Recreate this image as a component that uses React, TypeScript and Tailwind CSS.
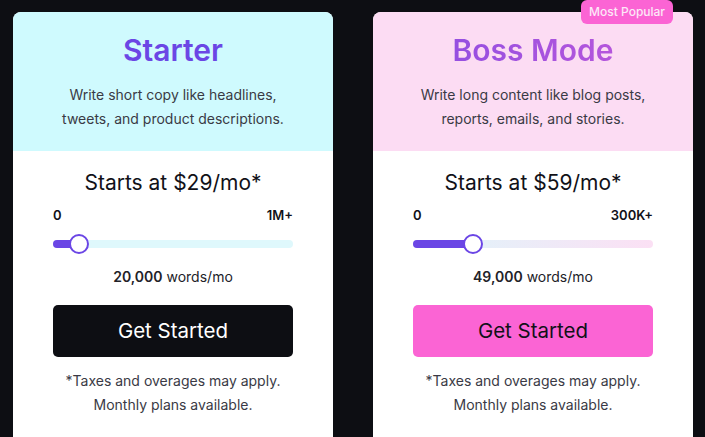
import React from "react";

const font = { fontFamily: "Inter, 'Noto Sans', sans-serif" };

function Slider({ pct, track }: { pct: number; track: string }) {
  return (
    <div className="relative mt-[9px] h-[20px] w-full">
      <div className={`absolute left-0 right-0 top-[6px] h-[8px] rounded-full ${track}`} />
      <div
        className="absolute left-0 top-[6px] h-[8px] rounded-full bg-[#6b46e5]"
        style={{ width: `${pct}%` }}
      />
      <div
        className="absolute top-0 h-[20px] w-[20px] -translate-x-1/2 rounded-full border-2 border-[#6b46e5] bg-white"
        style={{ left: `${pct}%` }}
      />
    </div>
  );
}

function Card({
  title,
  titleClass,
  headerBg,
  desc1,
  desc2,
  price,
  max,
  pct,
  track,
  words,
  btnClass,
  badge,
}: {
  title: string;
  titleClass: string;
  headerBg: string;
  desc1: string;
  desc2: string;
  price: string;
  max: string;
  pct: number;
  track: string;
  words: string;
  btnClass: string;
  badge?: boolean;
}) {
  return (
    <div className="relative w-[320px] shrink-0">
      {badge && (
        <div className="absolute right-[20px] top-[-12px] z-10 rounded-md bg-[#fb64d4] px-[8px] text-[12px] font-medium leading-[24px] text-[#fde8f7]">
          Most Popular
        </div>
      )}
      <div className="overflow-hidden rounded-t-[8px] bg-white">
        <div className={`${headerBg} px-5 pb-[20px] pt-[20px] text-center`}>
          <div className={`text-[30px] font-semibold leading-[36px] ${titleClass}`}>
            {title}
          </div>
          <div className="mt-[15px] text-[14px] leading-[24px] text-[#3a3a45]">
            <div>{desc1}</div>
            <div>{desc2}</div>
          </div>
        </div>
        <div className="px-[40px] pb-[40px] pt-[18px] text-center">
          <div className="text-[21px] leading-[28px] text-[#111118]">{price}</div>
          <div className="mt-[8px] flex justify-between text-[13px] font-semibold leading-[20px] text-[#111118]">
            <span>0</span>
            <span>{max}</span>
          </div>
          <Slider pct={pct} track={track} />
          <div className="mt-[13px] text-[14px] leading-[20px] text-[#222228]">
            <span className="font-semibold">{words}</span> words/mo
          </div>
          <button
            className={`mt-[18px] flex h-[52px] w-full items-center justify-center rounded-[5px] text-[20.5px] ${btnClass}`}
          >
            Get Started
          </button>
          <div className="mt-[12px] text-[14px] leading-[24px] text-[#3a3a45]">
            <div>*Taxes and overages may apply.</div>
            <div>Monthly plans available.</div>
          </div>
        </div>
      </div>
    </div>
  );
}

export default function App() {
  return (
    <div
      className="flex h-[437px] w-[705px] gap-[40px] overflow-hidden bg-[#0d0e13] pl-[13px] pt-[12px]"
      style={font}
    >
      <Card
        title="Starter"
        titleClass="text-[#6b46e5]"
        headerBg="bg-[#cffafe]"
        desc1="Write short copy like headlines,"
        desc2="tweets, and product descriptions."
        price="Starts at $29/mo*"
        max="1M+"
        pct={11}
        track="bg-[#dff8fc]"
        words="20,000"
        btnClass="bg-[#0d0e13] text-white"
      />
      <Card
        title="Boss Mode"
        titleClass="bg-gradient-to-r from-[#8a4ce2] to-[#c057da] bg-clip-text text-transparent"
        headerBg="bg-[#fcdcf3]"
        desc1="Write long content like blog posts,"
        desc2="reports, emails, and stories."
        price="Starts at $59/mo*"
        max="300K+"
        pct={25}
        track="bg-gradient-to-r from-[#dcf6fb] to-[#fbe0f4]"
        words="49,000"
        btnClass="bg-[#fb64d4] text-[#111118]"
        badge
      />
    </div>
  );
}
